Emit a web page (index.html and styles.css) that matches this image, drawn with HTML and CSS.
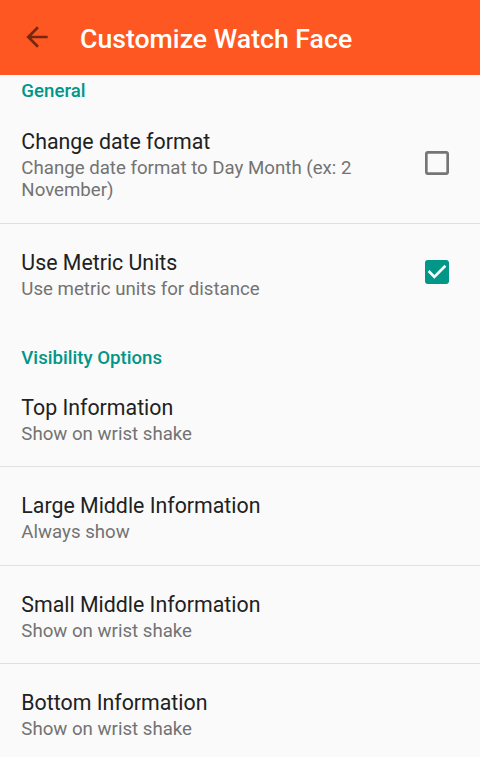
FILE: index.html
```html
<!DOCTYPE html>
<html lang="en">
<head>
<meta charset="utf-8">
<title>Customize Watch Face</title>
<link rel="stylesheet" href="styles.css">
</head>
<body>
<header class="toolbar">
  <svg class="back" viewBox="0 0 24 24" width="32" height="32" aria-hidden="true"><path d="M20 11H7.83l5.59-5.59L12 4l-8 8 8 8 1.41-1.41L7.83 13H20v-2z"/></svg>
  <h1 class="title">Customize Watch Face</h1>
</header>
<main class="prefs">
  <div class="category first">General</div>
  <div class="pref">
    <div class="pref-text">
      <div class="pref-title">Change date format</div>
      <div class="pref-summary">Change date format to Day Month (ex: 2 November)</div>
    </div>
    <svg class="check" viewBox="0 0 24 24" width="32" height="32" aria-hidden="true"><path class="off" d="M19 5v14H5V5h14m0-2H5c-1.1 0-2 .9-2 2v14c0 1.1.9 2 2 2h14c1.1 0 2-.9 2-2V5c0-1.1-.9-2-2-2z"/></svg>
  </div>
  <div class="pref">
    <div class="pref-text">
      <div class="pref-title">Use Metric Units</div>
      <div class="pref-summary">Use metric units for distance</div>
    </div>
    <svg class="check" viewBox="0 0 24 24" width="32" height="32" aria-hidden="true"><path class="on" d="M19 3H5c-1.11 0-2 .9-2 2v14c0 1.1.89 2 2 2h14c1.11 0 2-.9 2-2V5c0-1.1-.89-2-2-2zm-9 14l-5-5 1.41-1.41L10 14.170l7.59-7.59L19 8l-9 9z"/></svg>
  </div>
  <div class="category">Visibility Options</div>
  <div class="pref">
    <div class="pref-text">
      <div class="pref-title">Top Information</div>
      <div class="pref-summary">Show on wrist shake</div>
    </div>
  </div>
  <div class="pref">
    <div class="pref-text">
      <div class="pref-title">Large Middle Information</div>
      <div class="pref-summary">Always show</div>
    </div>
  </div>
  <div class="pref">
    <div class="pref-text">
      <div class="pref-title">Small Middle Information</div>
      <div class="pref-summary">Show on wrist shake</div>
    </div>
  </div>
  <div class="pref">
    <div class="pref-text">
      <div class="pref-title">Bottom Information</div>
      <div class="pref-summary">Show on wrist shake</div>
    </div>
  </div>
</main>
</body>
</html>
```
FILE: styles.css
```css
html, body {
  margin: 0;
  padding: 0;
}
body {
  width: 480px;
  height: 757px;
  overflow: hidden;
  background: #fafafa;
  font-family: Roboto, "Noto Sans", "Liberation Sans", sans-serif;
}
.toolbar {
  height: 74.67px;
  background: #ff5722;
  display: flex;
  align-items: center;
  padding-left: 21.33px;
  box-sizing: border-box;
}
.back {
  flex: none;
  fill: rgba(0, 0, 0, 0.54);
}
.title {
  margin: 0 0 0 26.67px;
  padding-top: 4px;
  font-size: 26.67px;
  font-weight: 500;
  color: #ffffff;
  line-height: 31px;
}
.prefs {
  display: flex;
  flex-direction: column;
}
.category {
  padding: 27px 21.33px 0;
  font-size: 18.67px;
  font-weight: 500;
  color: #009688;
  line-height: 21px;
}
.category.first {
  padding-top: 6.7px;
  line-height: 21.9px;
}
.pref {
  display: flex;
  align-items: center;
  padding: 26px 21.33px 20.67px;
}
.pref + .pref {
  border-top: 1px solid #e0e0e0;
}
.pref-text {
  flex: 1;
  min-width: 0;
}
.pref-title {
  font-size: 21.33px;
  line-height: 25px;
  color: #212121;
}
.pref-summary {
  margin-top: 4px;
  font-size: 18.67px;
  line-height: 21.8px;
  color: #737373;
}
.check {
  flex: none;
  margin: 0 5.67px 5.5px 16px;
}
.check .off {
  fill: #757575;
}
.check .on {
  fill: #009688;
}
```
